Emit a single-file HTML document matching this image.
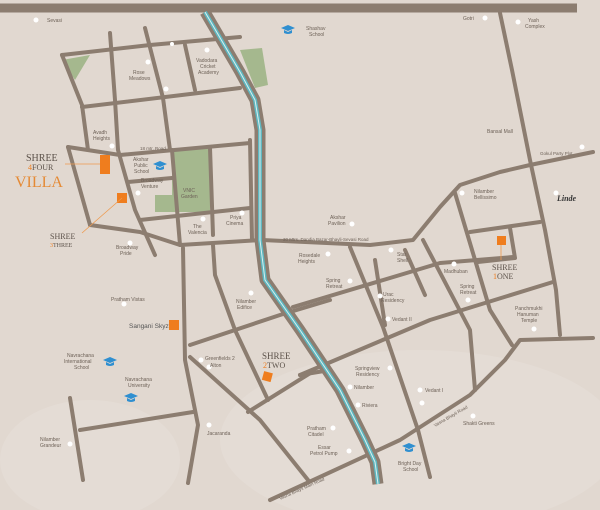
<!DOCTYPE html>
<html><head><meta charset="utf-8"><style>
html,body{margin:0;padding:0;background:#e1d8d0;}
svg{display:block}
text{font-family:"Liberation Sans",sans-serif;fill:#6e6258}
.s{font-family:"Liberation Serif",serif;fill:#5c524a}
</style></head><body>
<svg width="600" height="510" viewBox="0 0 600 510" xmlns="http://www.w3.org/2000/svg" font-size="5">
<rect width="600" height="510" fill="#e1d8d0"/>
<ellipse cx="420" cy="440" rx="200" ry="90" fill="#e4dcd5"/>
<ellipse cx="90" cy="460" rx="90" ry="60" fill="#e4dcd5"/>
<!-- parks -->
<polygon points="62,60 90,55 75,80" fill="#a5b88e"/>
<polygon points="240,50 262,48 268,85 255,88" fill="#a5b88e"/>
<polygon points="172,150 210,148 210,212 155,212 155,195 172,195" fill="#a5b88e"/>
<g fill="none" stroke="#8c7d70" stroke-width="4" stroke-linecap="round" stroke-linejoin="round">
<path d="M0,8 H577" stroke-width="9" stroke-linecap="butt"/>
<path d="M62,55 L150,45 L240,37"/>
<path d="M62,55 L82,105 L88,150"/>
<path d="M110,33 L115,100 L118,150 L135,210 L155,255"/>
<path d="M145,28 L163,98 L170,150"/>
<path d="M185,45 L195,90"/>
<path d="M82,107 L240,88"/>
<path d="M68,147 L120,155 L250,143"/>
<path d="M68,147 L90,225"/>
<path d="M90,225 L140,232 L180,245 L262,240 L370,245 L413,240 L440,207 L460,185 L500,172 L530,165 L593,152"/>
<path d="M128,182 L172,178"/>
<path d="M140,220 L250,208"/>
<path d="M172,150 L180,245"/>
<path d="M210,148 L213,235"/>
<path d="M250,140 L252,240"/>
<path d="M500,13 L512,70 L530,160 L545,230 L556,290 L560,335"/>
<path d="M270,500 L400,440 L470,395 L505,360 L520,340 L593,338"/>
<path d="M183,248 L185,360 L198,425 L188,483"/>
<path d="M213,245 L215,275 L235,330 L268,400"/>
<path d="M190,345 L280,315 L330,300"/>
<path d="M190,357 L260,420 L308,480"/>
<path d="M248,412 L312,372"/>
<path d="M70,398 L83,480"/>
<path d="M80,430 L193,412"/>
<path d="M350,247 L383,327 L418,430 L430,477"/>
<path d="M293,307 L440,263 L513,257"/>
<path d="M300,375 L430,320 L553,282"/>
<path d="M405,250 L425,295"/>
<path d="M423,240 L470,330 L475,390"/>
<path d="M455,193 L490,310 L512,345"/>
<path d="M470,232 L540,222"/>
<path d="M510,228 L515,258 L478,262"/>
<path d="M375,260 L385,325"/>
<path d="M300,375 L330,370"/>
</g>
<!-- canal -->
<path d="M205,12 L240,72 L255,100 L260,130 L260,240 L265,280 L300,330 L340,390 L365,440 L375,462 L378,484" fill="none" stroke="#8c7d70" stroke-width="11" stroke-linejoin="round"/>
<path d="M205,12 L240,72 L255,100 L260,130 L260,240 L265,280 L300,330 L340,390 L365,440 L375,462 L378,484" fill="none" stroke="#5fb7c0" stroke-width="4" stroke-linejoin="round"/>
<path d="M205,12 L240,72 L255,100 L260,130 L260,240 L265,280 L300,330 L340,390 L365,440 L375,462 L378,484" fill="none" stroke="#d9efee" stroke-width="1" stroke-linejoin="round"/>
<!-- markers -->
<g fill="#ef7d1e">
<rect x="100" y="155" width="10" height="19"/>
<rect x="117" y="193" width="10" height="10"/>
<rect x="169" y="320" width="10" height="10"/>
<rect x="263" y="372" width="9" height="9" transform="rotate(15 267 376)"/>
<rect x="497" y="236" width="9" height="9"/>
</g>
<g stroke="#ef9a4e" stroke-width="0.8" fill="none">
<path d="M65,164 H100"/><path d="M122,198 L90,226 L82,233"/><path d="M501,245 V260"/>
</g>
<!-- dots -->
<g fill="#fff">
<circle cx="36" cy="20" r="2.5"/><circle cx="148" cy="62" r="2.5"/><circle cx="166" cy="89" r="2.5"/><circle cx="207" cy="50" r="2.5"/>
<circle cx="112" cy="146" r="2.5"/><circle cx="138" cy="193" r="2.5"/><circle cx="203" cy="219" r="2.5"/><circle cx="242" cy="213" r="2.5"/>
<circle cx="130" cy="243" r="2.5"/><circle cx="124" cy="304" r="2.5"/><circle cx="251" cy="293" r="2.5"/><circle cx="201" cy="360" r="2.5"/>
<circle cx="209" cy="367" r="2.5"/><circle cx="209" cy="425" r="2.5"/><circle cx="70" cy="444" r="2.5"/><circle cx="172" cy="44" r="2"/>
<circle cx="352" cy="224" r="2.5"/><circle cx="328" cy="254" r="2.5"/><circle cx="350" cy="281" r="2.5"/><circle cx="391" cy="250" r="2.5"/>
<circle cx="380" cy="296" r="2.5"/><circle cx="388" cy="319" r="2.5"/><circle cx="390" cy="368" r="2.5"/><circle cx="350" cy="387" r="2.5"/>
<circle cx="358" cy="405" r="2.5"/><circle cx="420" cy="390" r="2.5"/><circle cx="422" cy="403" r="2.5"/><circle cx="333" cy="428" r="2.5"/>
<circle cx="349" cy="451" r="2.5"/><circle cx="473" cy="416" r="2.5"/><circle cx="454" cy="264" r="2.5"/><circle cx="468" cy="300" r="2.5"/>
<circle cx="534" cy="329" r="2.5"/><circle cx="462" cy="193" r="2.5"/><circle cx="556" cy="193" r="2.5"/><circle cx="582" cy="147" r="2.5"/>
<circle cx="518" cy="22" r="2.5"/><circle cx="485" cy="18" r="2.5"/>
</g>
<!-- school icons -->
<g fill="#2f8fd0">
<g transform="translate(288,28)"><path d="M-7,0 L0,-3 L7,0 L0,3Z"/><path d="M-4,2 V5 Q0,7 4,5 V2 L0,4Z"/></g>
<g transform="translate(160,164)"><path d="M-7,0 L0,-3 L7,0 L0,3Z"/><path d="M-4,2 V5 Q0,7 4,5 V2 L0,4Z"/></g>
<g transform="translate(110,360)"><path d="M-7,0 L0,-3 L7,0 L0,3Z"/><path d="M-4,2 V5 Q0,7 4,5 V2 L0,4Z"/></g>
<g transform="translate(131,396)"><path d="M-7,0 L0,-3 L7,0 L0,3Z"/><path d="M-4,2 V5 Q0,7 4,5 V2 L0,4Z"/></g>
<g transform="translate(409,446)"><path d="M-7,0 L0,-3 L7,0 L0,3Z"/><path d="M-4,2 V5 Q0,7 4,5 V2 L0,4Z"/></g>
</g>
<!-- labels -->
<text x="47" y="22">Sevasi</text>
<text x="306" y="30">Shashav</text><text x="309" y="36">School</text>
<text x="463" y="20">Gotri</text><text x="528" y="22">Yash</text><text x="525" y="28">Complex</text>
<text x="133" y="74">Rose</text><text x="129" y="80">Meadows</text>
<text x="196" y="62">Vadodara</text><text x="200" y="68">Cricket</text><text x="198" y="74">Academy</text>
<text x="93" y="134">Avadh</text><text x="93" y="140">Heights</text>
<text x="140" y="150" font-size="4.5">18 mtr. Road</text>
<text x="133" y="161">Akshar</text><text x="134" y="167">Public</text><text x="134" y="173">School</text>
<text x="141" y="182">Broadway</text><text x="141" y="188">Venture</text>
<text x="183" y="192">VNIC</text><text x="181" y="198">Garden</text>
<text x="193" y="228">The</text><text x="188" y="234">Valencia</text>
<text x="230" y="219">Priya</text><text x="226" y="225">Cinema</text>
<text x="116" y="249">Broadway</text><text x="120" y="255">Pride</text>
<text x="111" y="301">Pratham Vistas</text>
<text x="129" y="328" font-size="6.5" style="fill:#555">Sangani Skyz</text>
<text x="67" y="357">Navrachana</text><text x="64" y="363">International</text><text x="74" y="369">School</text>
<text x="125" y="381">Navrachana</text><text x="128" y="387">University</text>
<text x="40" y="441">Nilamber</text><text x="40" y="447">Grandeur</text>
<text x="236" y="303">Nilamber</text><text x="237" y="309">Edifice</text>
<text x="205" y="360">Greenfields 2</text><text x="210" y="367">Alton</text>
<text x="207" y="435">Jacaranda</text>
<text x="283" y="241" font-size="4.5">30 Mtrs. Dandia Bazar-Bhayli-Sevasi Road</text>
<text x="330" y="219">Akshar</text><text x="328" y="225">Pavilion</text>
<text x="299" y="257">Rosedale</text><text x="298" y="263">Heights</text>
<text x="326" y="282">Spring</text><text x="326" y="288">Retreat</text>
<text x="397" y="256">Star</text><text x="397" y="262">Shell</text>
<text x="383" y="296">Urac</text><text x="381" y="302">Residency</text>
<text x="392" y="321">Vedant II</text>
<text x="444" y="273">Madhuban</text>
<text x="460" y="288">Spring</text><text x="460" y="294">Retreat</text>
<text x="515" y="310">Panchmukhi</text><text x="517" y="316">Hanuman</text><text x="521" y="322">Temple</text>
<text x="355" y="370">Springview</text><text x="356" y="376">Residency</text>
<text x="354" y="389">Nilamber</text><text x="362" y="407">Riviera</text>
<text x="425" y="392">Vedant I</text>
<text x="463" y="425">Shakti Greens</text>
<text x="307" y="430">Pratham</text><text x="308" y="436">Citadel</text>
<text x="318" y="449">Essar</text><text x="310" y="455">Petrol Pump</text>
<text x="398" y="465">Bright Day</text><text x="403" y="471">School</text>
<text x="474" y="193">Nilamber</text><text x="474" y="199">Bellissimo</text>
<text x="487" y="133">Bansal Mall</text>
<text x="540" y="155" font-size="4.5">Gokul Party Plot</text>
<text x="557" y="201" font-size="8" font-style="italic" font-weight="bold" style="fill:#333;font-family:'Liberation Serif',serif">Linde</text>
<text x="280" y="500" font-size="4.5" transform="rotate(-24 280 500)">Vasna Bhayli Main Road</text>
<text x="435" y="427" font-size="4.5" transform="rotate(-30 435 427)">Vasna Bhayli Road</text>
<!-- project names -->
<text class="s" x="26" y="161" font-size="10">SHREE</text>
<text class="s" x="28" y="170" font-size="8"><tspan style="fill:#ef7d1e">4</tspan>FOUR</text>
<text class="s" x="15" y="187" font-size="16" style="fill:#e58a35">VILLA</text>
<text class="s" x="50" y="239" font-size="8">SHREE</text>
<text class="s" x="50" y="247" font-size="6"><tspan style="fill:#ef7d1e">3</tspan>THREE</text>
<text class="s" x="262" y="359" font-size="9">SHREE</text>
<text class="s" x="263" y="368" font-size="8"><tspan style="fill:#ef7d1e">2</tspan>TWO</text>
<text class="s" x="492" y="270" font-size="8">SHREE</text>
<text class="s" x="493" y="279" font-size="8"><tspan style="fill:#ef7d1e">1</tspan>ONE</text>
</svg>
</body></html>
